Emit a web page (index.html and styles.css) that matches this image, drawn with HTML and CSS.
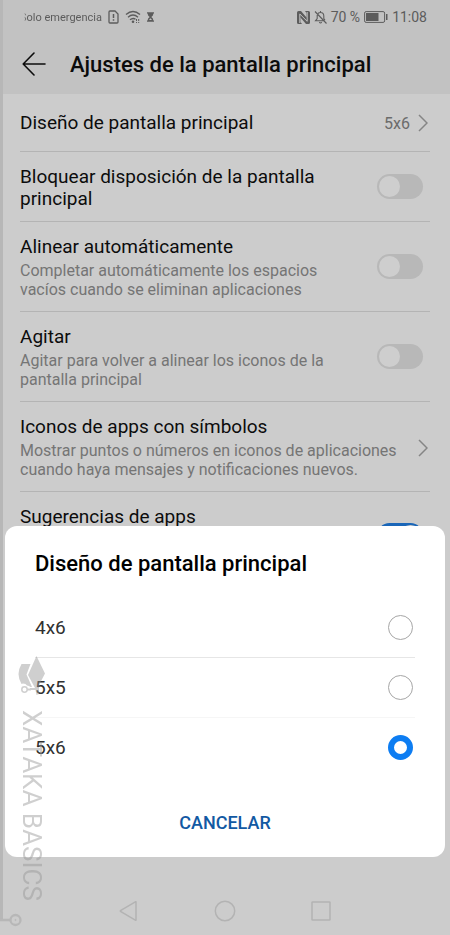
FILE: index.html
```html
<!DOCTYPE html>
<html lang="es">
<head>
<meta charset="utf-8">
<meta name="viewport" content="width=device-width, initial-scale=1">
<title>Ajustes de la pantalla principal</title>
<link rel="stylesheet" href="styles.css">
</head>
<body>
<div class="screen">
  <div class="status">
    <div class="status-group">
      <span class="carrier">Solo emergencia</span>
      <svg width="11" height="14" viewBox="0 0 11 14" fill="none" stroke="currentColor" stroke-width="1.3"><path d="M1 2Q1 1 2 1H7L10 4V12Q10 13 9 13H2Q1 13 1 12Z"/><path d="M5.500 4V8M5.500 9.300V10.800" stroke-width="1.500"/></svg>
      <svg width="16" height="14" viewBox="0 0 16 14" fill="none" stroke="currentColor" stroke-width="1.400"><path d="M1 4.500Q8-1.500 15 4.500M3 7.200Q8 3 13 7.200M5 9.800Q8 7.300 10.500 9.300"/><circle cx="8" cy="11.700" r="1.300" fill="currentColor" stroke="none"/><path d="M11.500 9V13M13.700 9V13" stroke-width="1" stroke-dasharray="2 1"/></svg>
      <svg width="7" height="10" viewBox="0 0 8 11" fill="currentColor"><path d="M0 0H8V1.500H7.300Q7.300 4 5 5.500Q7.300 7 7.300 9.500H8V11H0V9.500H.7Q.7 7 3 5.500Q.7 4 .7 1.500H0Z"/><path d="M2.300 8.800L4 7L5.700 8.800Z" fill="#c2c2c2"/></svg>
    </div>
    <div class="status-group status-right">
      <svg width="13" height="13" viewBox="0 0 13 13"><path d="M1.500 0H4L9.500 6.500V2L8 0H11.500Q13 0 13 1.500V11.500Q13 13 11.500 13H9L3.500 6.500V11L5 13H1.500Q0 13 0 11.500V1.500Q0 0 1.500 0Z" fill="currentColor"/><path d="M2.800 12V3L10.200 10.300V1" fill="none" stroke="#c2c2c2" stroke-width="1"/></svg>
      <svg width="13" height="13" viewBox="0 0 13 13" fill="none" stroke="currentColor" stroke-width="1.100"><path d="M1 .5L12.500 12.500M3.200 4V7.500L1.500 9.800H9.500M4 2.500Q5 1.500 6.500 1.500Q9.800 1.500 9.800 5V7.500L11 9.200M5.300 11.200Q6.500 12.700 7.700 11.200M6.500 0V1.500"/></svg>
      <span>70 %</span>
      <svg width="24" height="12" viewBox="0 0 24 12"><rect x=".6" y=".6" width="20" height="10.800" rx="1.500" fill="none" stroke="currentColor" stroke-width="1"/><rect x="2" y="2" width="12.500" height="8" fill="currentColor"/><rect x="22" y="3" width="1.500" height="6" fill="currentColor"/></svg>
      <span>11:08</span>
    </div>
  </div>
  <header class="header">
    <button class="back" type="button" aria-label="Atrás"><svg width="24" height="24" viewBox="0 0 24 24" fill="none" stroke="currentColor" stroke-width="1.600" stroke-linecap="round" stroke-linejoin="round"><path d="M23 12H1.200M12 1L1.200 12L12 23"/></svg></button>
    <h1 class="header-title">Ajustes de la pantalla principal</h1>
  </header>
  <main class="settings">
    <a class="row row-link" href="#">
      <span class="row-title">Diseño de pantalla principal</span>
      <span class="row-value">5x6</span>
      <svg class="chevron" width="10" height="18" viewBox="0 0 10 18"><path d="M1 1L9 9L1 17"/></svg>
    </a>
    <div class="row">
      <label class="row-text" for="lock"><span class="row-title">Bloquear disposición de la pantalla principal</span></label>
      <input class="toggle" type="checkbox" id="lock">
    </div>
    <div class="row">
      <label class="row-text" for="align"><span class="row-title">Alinear automáticamente</span><span class="row-desc">Completar automáticamente los espacios vacíos cuando se eliminan aplicaciones</span></label>
      <input class="toggle" type="checkbox" id="align">
    </div>
    <div class="row">
      <label class="row-text" for="shake"><span class="row-title">Agitar</span><span class="row-desc">Agitar para volver a alinear los iconos de la pantalla principal</span></label>
      <input class="toggle" type="checkbox" id="shake">
    </div>
    <a class="row" href="#">
      <span class="row-text row-text-wide"><span class="row-title">Iconos de apps con símbolos</span><span class="row-desc">Mostrar puntos o números en iconos de aplicaciones cuando haya mensajes y notificaciones nuevos.</span></span>
      <svg class="chevron" width="10" height="18" viewBox="0 0 10 18"><path d="M1 1L9 9L1 17"/></svg>
    </a>
    <div class="row row-last">
      <label class="row-text" for="suggest"><span class="row-title">Sugerencias de apps</span></label>
      <input class="toggle" type="checkbox" id="suggest" checked>
    </div>
  </main>
  <nav class="navbar">
    <button type="button" aria-label="Atrás"><svg width="24" height="24" viewBox="0 0 24 24"><path d="M19 3V21Q19 21.500 18.300 21.200L3.500 12.500Q3 12 3.500 11.500L18.300 2.800Q19 2.500 19 3Z"/></svg></button>
    <button type="button" aria-label="Inicio"><svg width="24" height="24" viewBox="0 0 24 24"><circle cx="12" cy="12" r="9.700"/></svg></button>
    <button type="button" aria-label="Recientes"><svg width="24" height="24" viewBox="0 0 24 24"><rect x="3" y="3" width="18" height="18" rx=".5"/></svg></button>
  </nav>

  <form class="sheet" role="dialog" aria-labelledby="sheet-title">
    <h2 class="sheet-title" id="sheet-title">Diseño de pantalla principal</h2>
    <label class="option"><span>4x6</span><input type="radio" name="grid"></label>
    <label class="option option-light"><span>5x5</span><input type="radio" name="grid"></label>
    <label class="option option-last"><span>5x6</span><input type="radio" name="grid" checked></label>
    <button class="cancel" type="button">CANCELAR</button>
  </form>

  <div class="edge"><svg width="22" height="16" viewBox="0 0 22 16"><path d="M0 8H10" stroke-width="2.500"/><circle cx="15.500" cy="8" r="5" stroke-width="2.300"/><circle cx="15.500" cy="8" r=".6" stroke-width="1"/></svg></div>
  <div class="brand">
    <svg width="28" height="40" viewBox="0 0 28 40"><path d="M3.500 8H12.500L8.500 18.500L14 31H12.500Q11 29.500 9 29.500Q8 27.500 5 27.500L3.500 28Q-2.500 18 3.500 8Z"/><path d="M18.500 0L27 17.500L21 29V38L18.500 39L17.500 34H12V32H17L10 19Z"/><circle cx="6.500" cy="33.500" r="2.700" fill="none" stroke="currentColor" stroke-width="1.500"/><path d="M9 32.500H13V34.500H9Z"/></svg>
    <span class="brand-name">XATAKA BASICS</span>
  </div>
</div>
</body>
</html>
```

FILE: styles.css
```css
* { box-sizing: border-box; }

body {
  margin: 0;
  font-family: Roboto, "Liberation Sans", sans-serif;
  color: #0c0c0c;
  background: #cccccc;
}

button {
  padding: 0;
  border: 0;
  background: none;
  color: inherit;
  font: inherit;
}

a { color: inherit; text-decoration: none; }
svg { display: block; flex: none; }

.screen {
  position: relative;
  display: flex;
  flex-direction: column;
  height: 100vh;
  overflow: hidden;
}

.status {
  display: flex;
  justify-content: space-between;
  align-items: center;
  height: 34px;
  padding: 0 23px 0 20px;
  background: #c2c2c2;
  color: #5c5c5c;
  font-size: 11px;
}

.status-group { display: flex; align-items: center; gap: 6px; }
.status-right { gap: 4px; font-size: 14px; }

.carrier {
  white-space: nowrap;
  mask-image: linear-gradient(to right, transparent 4px, #000000 6px);
}

.header {
  display: flex;
  align-items: center;
  gap: 24px;
  height: 60px;
  padding: 0 22px;
  background: #c2c2c2;
}

.header-title { margin: 0; padding-top: 2px; font-size: 22px; font-weight: 500; line-height: 28px; }

.settings { flex: 1; min-height: 0; overflow: hidden; padding: 0 20px; }

.row {
  display: flex;
  align-items: center;
  gap: 8px;
  padding: 14px 0 11px;
  border-bottom: 1px solid #b4b4b4;
}

.row-link { padding: 18px 0 17px; }
.row-link .row-title { flex: 1; }
.row-last { border-bottom: 0; }
.row-last .toggle { margin-top: 17px; }
.row-last .row-text { align-self: flex-start; }
.row-text { flex: 1; max-width: 320px; }
.row-text-wide { max-width: none; }
.row-title { display: block; font-size: 19px; line-height: 22px; }
.row-desc { display: block; margin: 3px 0 1px; font-size: 16px; line-height: 19px; color: #757575; }
.row-value { font-size: 16px; color: #6b6b6b; }

.chevron { margin-right: 2px; fill: none; stroke: #858585; stroke-width: 1.5; }

.toggle {
  appearance: none;
  flex: none;
  width: 46px;
  height: 25px;
  margin: 0 7px 4px auto;
  padding: 2px;
  border-radius: 13px;
  background: #b8b8b8;
}

.toggle::before {
  content: "";
  display: block;
  width: 21px;
  height: 21px;
  border-radius: 50%;
  background: #cecece;
}

.toggle:checked { background: #1a66b8; }
.toggle:checked::before { margin-left: auto; }

.navbar {
  display: flex;
  justify-content: center;
  gap: 72px;
  padding: 12px 0;
}

.navbar svg { fill: none; stroke: #b3b3b3; stroke-width: 1.5; }

.sheet {
  position: absolute;
  right: 5px;
  bottom: 78px;
  left: 5px;
  padding: 24px 30px 14px;
  border-radius: 12px;
  background: #ffffff;
}

.sheet-title { margin: 0 0 20px; font-size: 22px; font-weight: 500; line-height: 28px; color: #000000; }

.option {
  display: flex;
  justify-content: space-between;
  align-items: center;
  height: 60px;
  padding-right: 2px;
  border-bottom: 1px solid #e6e6e6;
  font-size: 19px;
  color: #303030;
}

.option-light { border-color: #f6f6f6; }
.option-last { border-color: transparent; }

.option input {
  appearance: none;
  width: 25px;
  height: 25px;
  margin: 0;
  border: 1px solid #a6a6a6;
  border-radius: 50%;
}

.option input:checked { border: 6px solid #0d7df2; }

.cancel {
  display: block;
  width: 100%;
  margin-top: 25px;
  font-size: 18px;
  font-weight: 500;
  line-height: 40px;
  color: #1259a3;
}

.edge {
  position: absolute;
  top: 0;
  bottom: 15px;
  left: 0;
  width: 3px;
  background: #b7b7b7;
}

.edge svg { position: absolute; bottom: -8px; left: 0; fill: none; stroke: #b7b7b7; }

.brand {
  position: absolute;
  bottom: 34px;
  left: 18px;
  display: flex;
  flex-direction: column;
  align-items: center;
  gap: 14px;
  color: #969696;
  opacity: 0.45;
  pointer-events: none;
}

.brand svg { fill: currentColor; }
.brand-name { writing-mode: vertical-rl; font-size: 26px; font-weight: 400; line-height: 28px; }
```
